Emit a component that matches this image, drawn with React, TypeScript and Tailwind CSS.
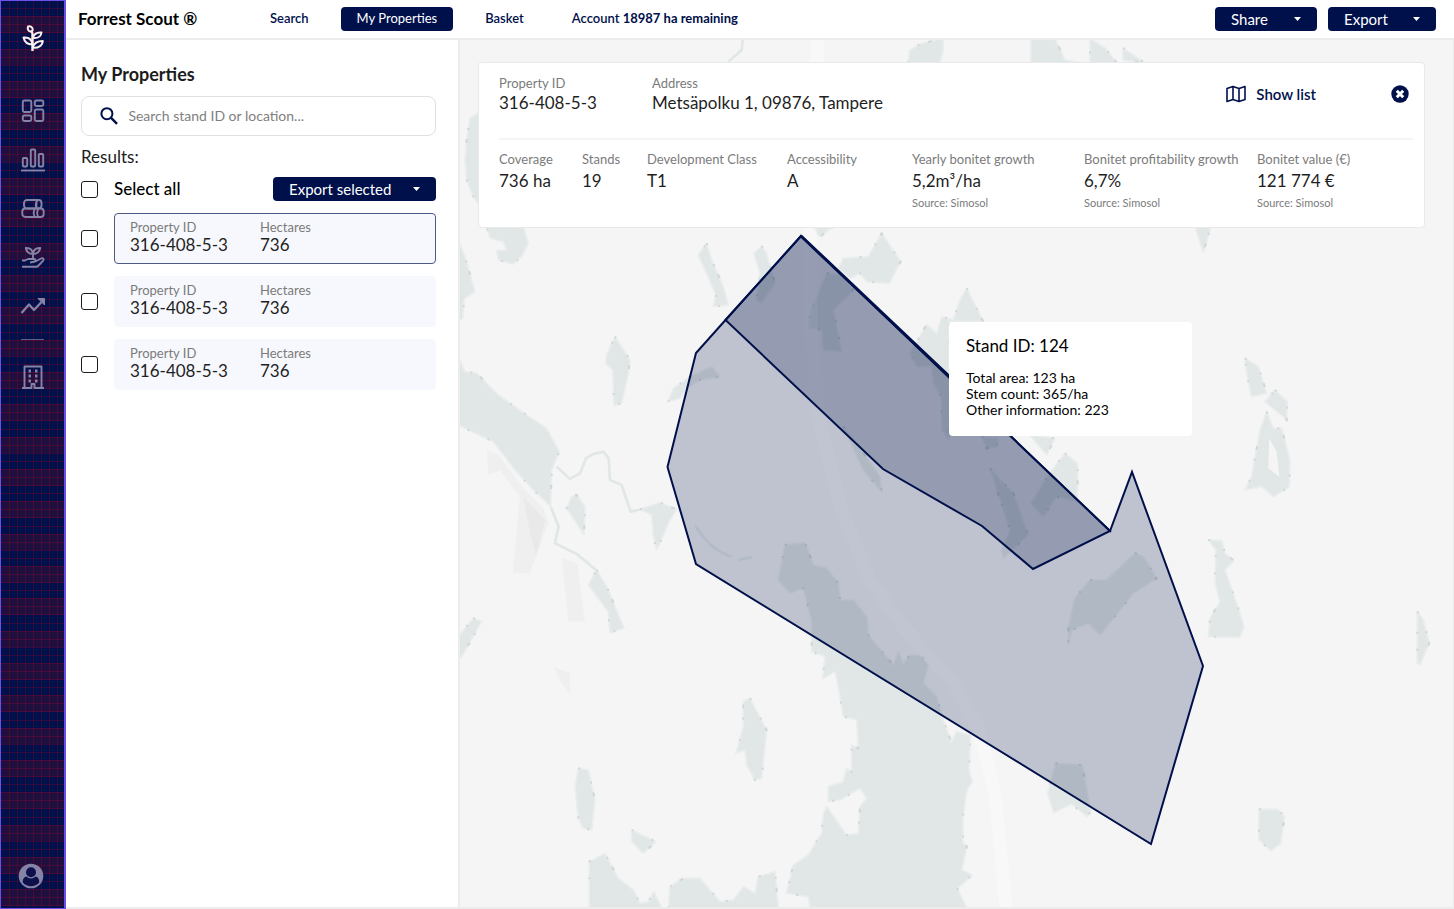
import type { ReactNode } from "react";

const lake = "#e1e7e6";
const shore = "#d0d7d6";
const navy = "#00104b";

function Shapes({ items }: { items: string[] }) {
  return (
    <>
      {items.map((points) => (
        <g key={points}>
          <polygon points={points} fill={lake} stroke="#e9eded" strokeWidth="5" strokeLinejoin="round" />
          <polygon
            points={points}
            fill="none"
            stroke={shore}
            strokeWidth="6"
            strokeDasharray="6 60 6 27 12 110 6 45 6 160"
          />
        </g>
      ))}
    </>
  );
}

function MapDrawing() {
  return (
    <svg
      className="absolute inset-0 h-full w-full"
      viewBox="460 40 993 867"
      preserveAspectRatio="xMinYMin slice"
      aria-hidden="true"
    >
      <g transform="translate(460 240) scale(.3333)">
        <g fill="#efefef">
          <polygon points="80,630 115,645 190,745 250,805 265,850 210,1000 158,1000 180,770 120,690 85,705" />
          <polygon points="305,955 352,970 375,1145 325,1145" />
          <polygon points="280,1280 330,1300 330,1365 305,1330" />
        </g>
        <polygon points="190,770 255,840 228,945 210,880" fill="#e9e9e9" />
        <g fill="none" stroke={lake} strokeWidth="8">
          <path d="M290 680 L330 717 L360 700 L378 655 L400 642 L430 635 L446 655 L450 720 L485 735 L512 815 L545 808" />
          <path d="M272 800 L296 860 L285 910 L350 942 L408 990" />
          <path d="M705 855 Q750 930 815 950 M835 960 L875 952" stroke="#e6ebee" />
          <path d="M805 -535 L845 -570 L850 -620" />
        </g>
        <Shapes
          items={[
            "-6,0 15,50 45,155 12,178 8,235 -6,240",
            "-6,350 15,395 50,400 115,465 200,525 260,565 298,635 275,690 272,800 215,745 165,690 100,605 -6,555",
            "465,290 510,360 505,400 485,490 462,497 458,390 437,370 440,345",
            "740,10 755,60 790,140 805,195 760,200 768,165 740,100 715,45",
            "905,18 920,40 945,130 905,190 890,180 900,100 882,40",
            "625,485 640,445 690,410 755,380 780,410 720,420 680,445 660,475",
            "540,808 600,788 650,808 630,840 590,930 580,890 575,825",
            "350,765 375,800 372,885 350,850 320,805 335,770",
            "410,990 440,1040 492,1165 450,1178 445,1115 385,1035",
            "40,1135 65,1145 5,1250 -6,1260 -6,1190",
          ]}
        />
      </g>
      <g transform="translate(460 40) scale(.3333)">
        <Shapes
          items={[
            "80,560 190,560 205,610 185,650 160,672 115,660 110,632 140,630 130,605 90,595",
            "60,215 30,235 20,300 15,360 20,420 40,470 60,500",
          ]}
        />
      </g>
      <g transform="translate(460 520) scale(.3333)">
        <Shapes
          items={[
            "975,75 1035,68 1060,135 1100,145 1135,190 1140,240 1180,240 1220,290 1225,345 1270,400 1300,435 1315,395 1330,430 1350,405 1385,408 1405,435 1390,490 1430,530 1450,600 1474,665 1490,635 1532,645 1527,750 1537,785 1521,810 1509,890 1509,970 1521,980 1505,1050 1537,1065 1492,1105 1521,1165 1050,1165 1045,1130 980,1120 1000,1035 1045,1005 1085,940 1090,880 1100,860 1160,945 1195,940 1200,860 1220,835 1200,805 1140,840 1105,845 1105,800 1150,785 1160,745 1175,755 1175,675 1195,685 1190,600 1150,590 1135,500 1125,455 1100,470 1088,475 1095,410 1055,395 1055,300 1030,205 990,220 955,180",
            "870,535 920,630 905,775 885,780 860,735 855,690 828,700 850,620 850,545",
            "355,745 385,750 405,840 395,930 370,925 355,895 345,800",
            "515,930 588,965 550,1000 515,965",
            "388,1025 435,1000 475,1075 520,1110 540,1150 565,1145 582,1115 605,1165 388,1165",
            "625,1165 630,1100 670,1075 720,1075 780,1145 820,1140 850,1100 885,1120 895,1070 945,1055 955,1165",
          ]}
        />
      </g>
      <g transform="translate(900 560) scale(.3533 .3333)">
        <Shapes
          items={[
            "440,610 515,615 540,755 530,770 485,732 435,758 418,700",
            "1016,748 1070,748 1088,770 1078,850 1050,873 1016,840",
          ]}
        />
      </g>
      <g transform="translate(1040 230) scale(.3333)">
        <Shapes
          items={[
            "285,970 310,980 350,1045 280,1090 180,1215 145,1180 95,1200 85,1245 85,1190 105,1105 150,1050 200,1050",
            "505,930 545,932 555,970 582,992 555,1020 600,1150 612,1190 600,1222 505,1220 510,1165 540,1115 525,1060 528,960",
            "1132,1145 1150,1170 1168,1240 1140,1305 1132,1300",
            "615,385 655,410 680,490 635,500 622,440",
            "705,480 742,515 740,570 675,515",
            "680,545 700,595 725,595 750,690 748,770 700,800 665,770 615,780 635,740 660,600",
            "465,-10 512,-10 490,68",
          ]}
        />
        <polygon points="688,625 710,665 718,740 685,715" fill="#f5f5f5" />
      </g>
      <g transform="translate(800 230) scale(.3333)">
        <Shapes
          items={[
            "245,10 302,95 268,160 200,155 180,130 150,145 115,115 130,85 205,80",
            "80,130 130,135 160,180 100,240 125,365 70,360 65,300 25,295 30,250",
            "500,175 550,275 448,275 448,630 425,600 425,500 400,460 395,410 350,410 330,370 380,283 410,310 425,260 460,270 480,210",
            "690,615 765,625 740,675",
            "795,670 833,700 833,815 770,800 730,860 693,820 745,735",
            "545,620 595,625 590,650 560,655",
            "570,715 640,790 685,915 610,985 605,960 630,900",
            "130,590 170,640 240,740 245,785 190,720",
            "35,-10 100,-10 60,20",
            "324,-501 330,-540 360,-558 430,-575 430,-540 420,-501",
            "693,-575 765,-575 795,-510 850,-501 693,-501",
            "870,-575 915,-546 951,-501 870,-501",
            "969,-546 1035,-501 969,-510",
          ]}
        />
      </g>
      <path
        d="M818 40 L810 230 L811 330 L820 427 L843 513 L870 580 L900 623 L953 683 L978 727 L995 793 L1006 907"
        fill="none"
        stroke="#ffffff"
        strokeOpacity=".35"
        strokeWidth="13"
        strokeLinejoin="round"
      />
      <g fill={navy} fillOpacity=".22" stroke={navy} strokeWidth="2">
        <polygon points="801,236 1110,531 1132,472 1203,666 1151,844 696,564 667.500,467 696,353 725.500,320" />
        <polygon points="801,236 1110,531 1033,569 982,526 883,469 725.500,320" />
      </g>
      <path d="M801 236 L950 377" stroke={navy} strokeWidth="3" />
    </svg>
  );
}

function PlaidTexture() {
  const columns = [8, 16, 24, 32, 40, 48, 56];
  const rows = [7, 15, 23, 31, 40, 48, 56, 64, 72, 80, 88, 96];
  return (
    <svg className="absolute inset-0 h-full w-full" aria-hidden="true">
      <defs>
        <pattern id="plaid" width="64" height="97" patternUnits="userSpaceOnUse">
          <rect width="64" height="97" fill={navy} />
          <g fill="#1f0f3e">
            <rect y="15" width="64" height="17" />
            <rect y="48" width="64" height="16" />
            <rect y="80" width="64" height="17" />
          </g>
          <g fill="#a00028" fillOpacity=".3">
            {columns.map((x) => (
              <rect key={x} x={x} width="1" height="97" />
            ))}
            {rows.map((y) => (
              <rect key={y} y={y} width="64" height="1" />
            ))}
          </g>
        </pattern>
      </defs>
      <rect width="100%" height="100%" fill="url(#plaid)" />
    </svg>
  );
}

function NavIcon({ label, children }: { label: string; children: ReactNode }) {
  return (
    <a href="#" aria-label={label} className="flex h-[33px] items-center justify-center text-[#8583a6]">
      <svg width="26" height="26" viewBox="0 0 26 26" fill="none" stroke="currentColor" strokeWidth="1.900" strokeLinejoin="round">
        {children}
      </svg>
    </a>
  );
}

function Sidebar() {
  return (
    <aside className="relative w-[66px] shrink-0 border-y border-r-2 border-l border-[#6a4fe8] bg-[#00104b]">
      <PlaidTexture />
      <nav className="relative flex h-full flex-col gap-4 pt-5 pb-4" aria-label="Main">
        <a href="#" aria-label="Home" className="mb-6 flex h-[33px] items-center justify-center text-[#fbeeee]">
          <svg width="26" height="28" viewBox="0 0 26 28" fill="none" stroke="currentColor" strokeWidth="2" strokeLinejoin="round">
            <path d="M12.500 27 V10 C12.500 9 12 8 11 7.500" strokeWidth="2.400" />
            <path d="M10.500 7.500 C8 7 7.300 4.500 8 2.500 C10.500 2 12.700 3 12.700 5.500 C12.700 7 11.500 7.500 10.500 7.500 Z" />
            <path d="M12.700 14 C14 10 17 8 21.500 8.500 C21 12.500 17.500 14.500 12.700 14 Z" />
            <path d="M12.500 20.500 C8 20.500 4.500 18 3.500 13.500 C8.500 13 12 15.500 12.500 20.500 Z" />
            <path d="M12.700 23.500 C14 19 17.500 17 22.800 17 C22.500 21.500 18 24.500 12.700 23.500 Z" />
          </svg>
        </a>
        <NavIcon label="Dashboard">
          <rect x="2.800" y="2.500" width="8.500" height="11.500" rx="1.500" />
          <rect x="14.800" y="2.500" width="8.500" height="5.500" rx="1.500" />
          <rect x="2.800" y="17.500" width="8.500" height="5.500" rx="1.500" />
          <rect x="14.800" y="11.500" width="8.500" height="11.500" rx="1.500" />
        </NavIcon>
        <NavIcon label="Statistics">
          <path d="M1 23.500 H25" />
          <rect x="2.800" y="11" width="4.400" height="8.500" rx="1" />
          <rect x="10.800" y="2.500" width="4.400" height="17" rx="1" />
          <rect x="18.800" y="7" width="4.400" height="12.500" rx="1" />
        </NavIcon>
        <NavIcon label="Timber">
          <rect x="4" y="4" width="17.500" height="8.500" rx="3" />
          <path d="M16.500 4 V12.500 M16.500 12.500 C15 9 16 5.500 18 4" />
          <rect x="2.300" y="12.500" width="21.400" height="8.500" rx="3" />
          <path d="M14.500 12.500 C13.500 15 13.500 18.500 14.500 21 M18 12.500 C17 15 17 18.500 18 21" />
        </NavIcon>
        <NavIcon label="Planting">
          <path d="M13 13 V8.500 M13 9 C9 9 6.500 7 5.800 3 C9.500 2.800 12.500 4.500 13 9 Z M13 9 C13.500 4.500 16.500 2.800 20.200 3 C19.500 7 17 9 13 9 Z" />
          <path d="M2 15.500 H5 L8 14 H14 C16 14 16.200 16.500 14 16.800 L10 17.500 M15.500 16.500 L21 13.500 C23 12.500 24.500 14 23 15.800 L18 21 C17.500 21.500 17 21.700 16 21.700 H2" />
        </NavIcon>
        <NavIcon label="Trends">
          <path d="M1.500 19 L9 10.500 L14 16 L21.500 8" strokeWidth="2.300" />
          <path d="M18 4.500 H24.500 V11 Z" fill="currentColor" strokeWidth="1" />
        </NavIcon>
        <hr className="mx-5 border-[#8583a6]/70" />
        <div className="mt-1">
          <NavIcon label="Company">
            <path d="M4.500 24 V2.500 H21.500 V24 M2 24 H11.500 V20 H14.500 V24 H24" />
            <path d="M8.500 7 H11 M15 7 H17.500 M8.500 12 H11 M15 12 H17.500 M8.500 17 H11 M15 17 H17.500" strokeWidth="2.800" />
          </NavIcon>
        </div>
        <a href="#" aria-label="Account" className="mt-auto mr-1 flex h-[33px] items-center justify-center text-[#8583a6]">
          <svg width="26" height="26" viewBox="0 0 26 26">
            <circle cx="13" cy="13" r="12.300" fill="currentColor" />
            <circle cx="13" cy="9.300" r="5" fill="#0d104a" />
            <path d="M4.800 19.500 C4.500 15.500 6.500 14 8.500 13.500 C11 16 15 16 17.500 13.500 C19.500 14 21.500 15.500 21.200 19.500 C17 24.500 9 24.500 4.800 19.500 Z" fill="#0d104a" />
          </svg>
        </a>
      </nav>
    </aside>
  );
}

function DropButton({ label, className }: { label: string; className: string }) {
  return (
    <button className={`flex h-6 items-center justify-between rounded bg-[#00104b] px-4 text-[15px] leading-5 text-white ${className}`}>
      {label}
      <svg width="7" height="4" viewBox="0 0 7 4" aria-hidden="true">
        <path d="M0 0 H7 L3.500 4 Z" fill="#fff" />
      </svg>
    </button>
  );
}

function Header() {
  return (
    <header className="flex h-10 shrink-0 items-center border-b-2 border-[#ececec] pr-[18px] pl-3">
      <h1 className="w-[176px] text-[17px] font-bold text-black">Forrest Scout ®</h1>
      <nav className="flex items-center gap-4 text-[13px] font-semibold text-[#00104b]" aria-label="Sections">
        <a href="#" className="flex h-6 items-center px-4">Search</a>
        <a href="#" className="flex h-6 items-center rounded bg-[#00104b] px-4 font-normal text-white">My Properties</a>
        <a href="#" className="flex h-6 items-center px-4">Basket</a>
        <a href="#" className="flex h-6 items-center px-4 whitespace-pre">Account <b className="font-bold">18987 ha remaining</b></a>
      </nav>
      <div className="ml-auto flex gap-[11px]">
        <DropButton label="Share" className="w-[102px]" />
        <DropButton label="Export" className="w-[108px]" />
      </div>
    </header>
  );
}

const checkbox =
  "size-[17px] shrink-0 appearance-none rounded-[3px] border border-[#1c1c1c] bg-white checked:bg-[#00104b]";

type FieldProps = { label: string; value: string; source?: string; valueClass?: string };

function Field({ label, value, source, valueClass = "" }: FieldProps) {
  return (
    <div>
      <dt className="text-[13px] leading-4 whitespace-nowrap text-[#7b7b7b]">{label}</dt>
      <dd className={`text-[17px] leading-5 whitespace-nowrap text-[#1f1f1f] ${valueClass}`}>{value}</dd>
      {source && <dd className="mt-1 text-[11px] leading-4 text-[#7b7b7b]">{source}</dd>}
    </div>
  );
}

const properties = [
  { id: "316-408-5-3", hectares: "736", active: true },
  { id: "316-408-5-3", hectares: "736", active: false },
  { id: "316-408-5-3", hectares: "736", active: false },
];

function PropertyPanel() {
  return (
    <section className="w-[394px] shrink-0 border-r-2 border-[#ececec] pt-6 pr-[22px] pl-[15px]">
      <h2 className="text-lg leading-5 font-bold text-[#1c1c1c]">My Properties</h2>
      <label className="mt-3 flex h-10 items-center gap-2 rounded-lg border border-[#e0e0e0] pl-[18px]">
        <svg width="20" height="20" viewBox="0 0 20 20" fill="none" stroke={navy} strokeWidth="2.200" aria-hidden="true">
          <circle cx="7.500" cy="7.500" r="6" />
          <path d="M11.800 11.800 L18.500 18.500" strokeWidth="2.700" />
        </svg>
        <input
          type="text"
          aria-label="Search stand ID or location"
          placeholder="Search stand ID or location..."
          className="w-full bg-transparent pl-0.5 text-sm text-[#1c1c1c] outline-none placeholder:text-[#808080]"
        />
      </label>
      <p className="mt-[11px] text-[17px] leading-5 text-[#1c1c1c]">Results:</p>
      <div className="mt-2.5 flex items-center">
        <input id="select-all" type="checkbox" className={checkbox} />
        <label htmlFor="select-all" className="pl-4 text-[17px] leading-6 font-medium text-black">Select all</label>
        <DropButton label="Export selected" className="ml-auto w-[163px]" />
      </div>
      <ul className="mt-3 flex flex-col gap-3">
        {properties.map((property, index) => (
          <li key={index} className="flex items-center gap-4">
            <input id={`property-${index}`} type="checkbox" className={checkbox} />
            <label
              htmlFor={`property-${index}`}
              className={`flex-1 rounded border bg-[#f7f8fd] px-[15px] pt-[5px] pb-2 ${
                property.active ? "border-[#4d5986]" : "border-[#f7f8fd]"
              }`}
            >
              <dl className="grid grid-cols-[130px_1fr]">
                <Field label="Property ID" value={property.id} />
                <Field label="Hectares" value={property.hectares} />
              </dl>
            </label>
          </li>
        ))}
      </ul>
    </section>
  );
}

function SummaryCard() {
  return (
    <article className="relative mt-[22px] mr-7 ml-[18px] rounded border border-[#e9e9e9] bg-white pr-[11px] pb-4 pl-5">
      <div className="flex h-[77px] items-start border-b-2 border-[#f5f5f5] pt-3">
        <dl className="grid grid-cols-[153px_1fr]">
          <Field label="Property ID" value="316-408-5-3" valueClass="mt-0.5" />
          <Field label="Address" value="Metsäpolku 1, 09876, Tampere" valueClass="mt-0.5" />
        </dl>
        <button className="mt-[7px] ml-auto flex items-center gap-2.5 text-[15px] leading-6 font-semibold text-[#00104b]">
          <svg width="20" height="18" viewBox="0 0 20 18" fill="none" stroke="currentColor" strokeWidth="1.600" strokeLinejoin="round" aria-hidden="true">
            <path d="M1 3.500 L7 1.500 L13 3.500 L19 1.500 V14.500 L13 16.500 L7 14.500 L1 16.500 Z M7 1.500 V14.500 M13 3.500 V16.500" />
          </svg>
          Show list
        </button>
        <button aria-label="Close" className="mt-2.5 mr-1 ml-[75px]">
          <svg width="18" height="18" viewBox="0 0 18 18" aria-hidden="true">
            <circle cx="9" cy="9" r="8.700" fill={navy} />
            <path d="M5.800 5.800 L12.200 12.200 M12.200 5.800 L5.800 12.200" stroke="#fff" strokeWidth="3" />
          </svg>
        </button>
      </div>
      <dl className="grid grid-cols-[83px_65px_140px_125px_172px_173px_auto] pt-[11px]">
        <Field label="Coverage" value="736 ha" valueClass="mt-1" />
        <Field label="Stands" value="19" valueClass="mt-1" />
        <Field label="Development Class" value="T1" valueClass="mt-1" />
        <Field label="Accessibility" value="A" valueClass="mt-1" />
        <Field label="Yearly bonitet growth" value="5,2m³/ha" source="Source: Simosol" valueClass="mt-1" />
        <Field label="Bonitet profitability growth" value="6,7%" source="Source: Simosol" valueClass="mt-1" />
        <Field label="Bonitet value (€)" value="121 774 €" source="Source: Simosol" valueClass="mt-1" />
      </dl>
    </article>
  );
}

function StandTooltip() {
  return (
    <div role="tooltip" className="absolute top-[282px] left-[489px] w-[243px] rounded bg-white px-[17px] pt-3 pb-[18px] text-black">
      <p className="text-[17px] leading-6">Stand ID: 124</p>
      <p className="mt-3 text-sm leading-4">Total area: 123 ha</p>
      <p className="text-sm leading-4">Stem count: 365/ha</p>
      <p className="text-sm leading-4">Other information: 223</p>
    </div>
  );
}

export default function App() {
  return (
    <div className="flex min-h-screen bg-white font-['Lato','Noto_Sans',sans-serif]">
      <Sidebar />
      <div className="flex min-w-0 flex-1 flex-col">
        <Header />
        <div className="flex flex-1 border-r border-b-2 border-[#ececec]">
          <PropertyPanel />
          <main className="relative min-w-0 flex-1 overflow-hidden bg-[#f5f5f5]">
            <MapDrawing />
            <SummaryCard />
            <StandTooltip />
          </main>
        </div>
      </div>
    </div>
  );
}
